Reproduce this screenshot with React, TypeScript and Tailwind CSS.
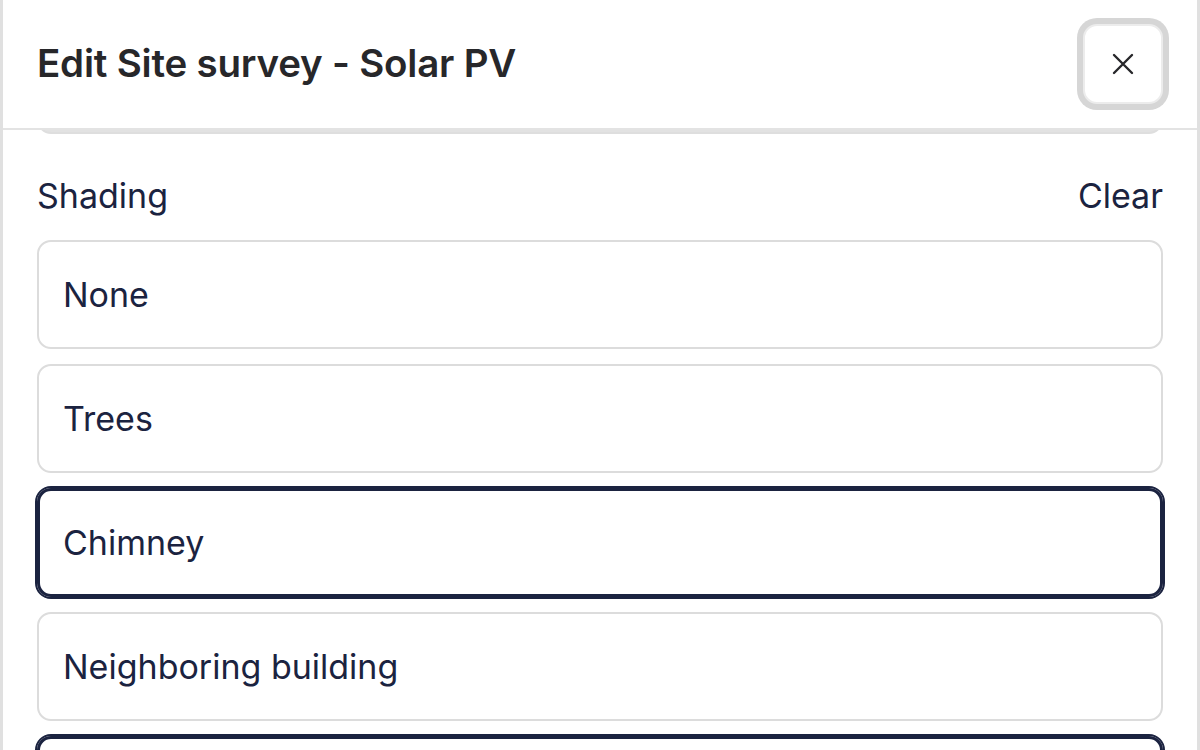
import { useState } from "react";
import clsx from "clsx";

const shadingOptions = ["None", "Trees", "Chimney", "Neighboring building", "Other"];

function CloseIcon() {
  return (
    <svg width="22" height="22" viewBox="0 0 22 22" fill="none">
      <path d="M2 2L20 20M20 2L2 20" stroke="#27272a" strokeWidth="2.4" strokeLinecap="round" />
    </svg>
  );
}

export default function App() {
  const [selected, setSelected] = useState<string[]>(["Chimney", "Other"]);

  const toggle = (option: string) =>
    setSelected((prev) =>
      prev.includes(option) ? prev.filter((o) => o !== option) : [...prev, option]
    );

  return (
    <div className="w-[1200px] h-[750px] overflow-hidden bg-white border-x-[3px] border-[#e0e0e0] flex flex-col font-['Inter',sans-serif]">
      <header className="h-[130px] shrink-0 flex items-center justify-between px-[34px] border-b-2 border-[#e3e3e3]">
        <h1 className="text-[38.5px] font-semibold text-[#27272a] tracking-[-0.2px]">
          Edit Site survey - Solar PV
        </h1>
        <button className="w-[80px] h-[80px] rounded-[14px] border-2 border-[#ececec] ring-[6px] ring-[#d6d6d6] bg-white flex items-center justify-center">
          <CloseIcon />
        </button>
      </header>

      <div className="flex-1 overflow-hidden px-[34px]">
        {/* bottom edge of the previous question, scrolled under the header */}
        <div className="h-[4px] overflow-hidden">
          <div className="h-[60px] -mt-[56px] rounded-[14px] border-2 border-[#dedede] bg-[#e2e2e2]" />
        </div>

        <div className="mt-[42px] flex items-center justify-between text-[#1b2340] text-[34px] leading-[40px]">
          <span>Shading</span>
          <button onClick={() => setSelected([])}>Clear</button>
        </div>

        <ul className="mt-[24px] flex flex-col gap-[15px]">
          {shadingOptions.map((option) => {
            const isActive = selected.includes(option);
            return (
              <li key={option}>
                <button
                  onClick={() => toggle(option)}
                  className={clsx(
                    "w-full h-[109px] rounded-[14px] bg-white flex items-center text-[34px] text-[#1b2340] text-left",
                    isActive
                      ? "border-[3px] pl-[23px] border-[#1b2340] outline-2 outline-[#1b2340]"
                      : "border-2 pl-[24px] border-[#dcdcdc]"
                  )}
                >
                  {option}
                </button>
              </li>
            );
          })}
        </ul>
      </div>
    </div>
  );
}
